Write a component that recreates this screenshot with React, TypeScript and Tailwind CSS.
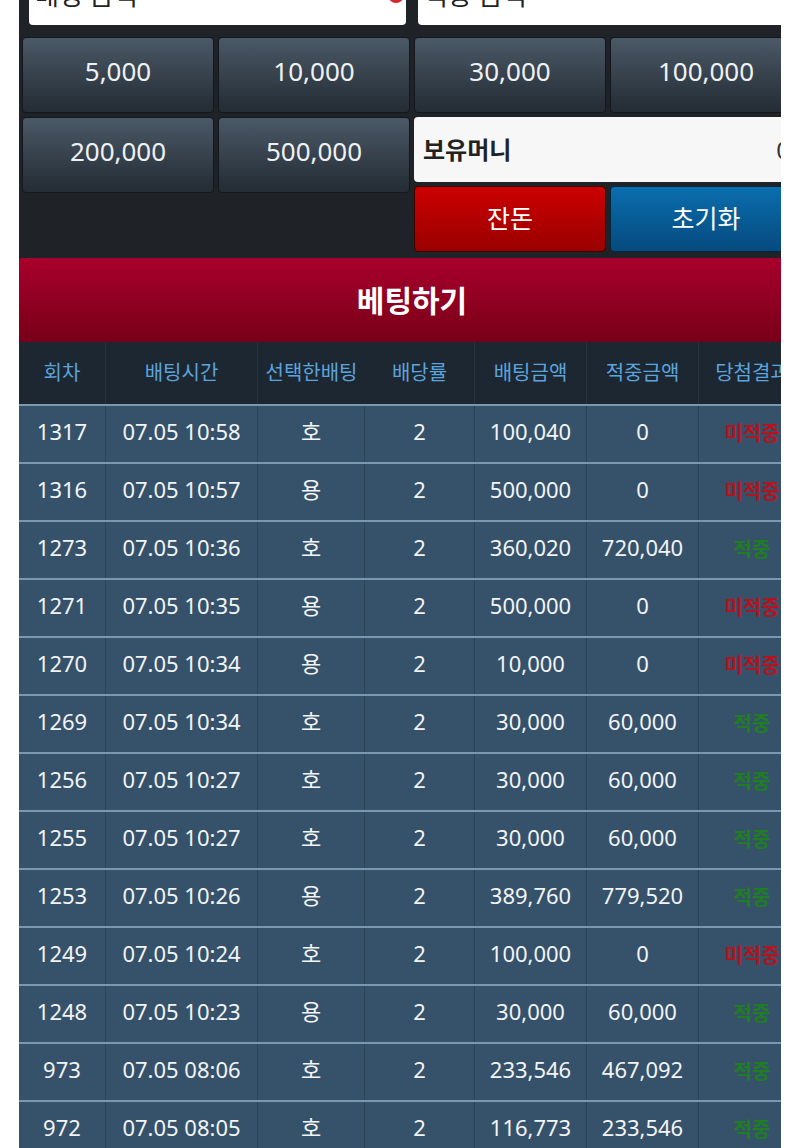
import React from "react";

type Row = {
  round: string;
  time: string;
  pick: string;
  odds: string;
  bet: string;
  win: string;
  hit: boolean;
};

const ROWS: Row[] = [
  { round: "1317", time: "07.05 10:58", pick: "호", odds: "2", bet: "100,040", win: "0", hit: false },
  { round: "1316", time: "07.05 10:57", pick: "용", odds: "2", bet: "500,000", win: "0", hit: false },
  { round: "1273", time: "07.05 10:36", pick: "호", odds: "2", bet: "360,020", win: "720,040", hit: true },
  { round: "1271", time: "07.05 10:35", pick: "용", odds: "2", bet: "500,000", win: "0", hit: false },
  { round: "1270", time: "07.05 10:34", pick: "용", odds: "2", bet: "10,000", win: "0", hit: false },
  { round: "1269", time: "07.05 10:34", pick: "호", odds: "2", bet: "30,000", win: "60,000", hit: true },
  { round: "1256", time: "07.05 10:27", pick: "호", odds: "2", bet: "30,000", win: "60,000", hit: true },
  { round: "1255", time: "07.05 10:27", pick: "호", odds: "2", bet: "30,000", win: "60,000", hit: true },
  { round: "1253", time: "07.05 10:26", pick: "용", odds: "2", bet: "389,760", win: "779,520", hit: true },
  { round: "1249", time: "07.05 10:24", pick: "호", odds: "2", bet: "100,000", win: "0", hit: false },
  { round: "1248", time: "07.05 10:23", pick: "용", odds: "2", bet: "30,000", win: "60,000", hit: true },
  { round: "973", time: "07.05 08:06", pick: "호", odds: "2", bet: "233,546", win: "467,092", hit: true },
  { round: "972", time: "07.05 08:05", pick: "호", odds: "2", bet: "116,773", win: "233,546", hit: true },
];

const HEADERS = ["회차", "배팅시간", "선택한배팅", "배당률", "배팅금액", "적중금액", "당첨결과"];

const COLS = "grid grid-cols-[87px_152px_107px_110px_112px_112px_106px]";

function ChipButton({ label }: { label: string }) {
  return (
    <button className="flex h-[76px] items-center justify-center rounded-[4px] border border-[#14181c] bg-gradient-to-b from-[#4b5967] to-[#242c34] pb-[7px] text-[26px] text-[#eef1f4]">
      {label}
    </button>
  );
}

export default function App() {
  return (
    <div className="h-[1148px] w-[800px] overflow-hidden bg-white font-['Noto_Sans','Noto_Sans_CJK_KR',sans-serif]">
      <div className="ml-[19px] h-full w-[762px] overflow-hidden">
        <div className="w-[786px] bg-[#1f2327]">
          {/* Amount inputs (scrolled partly out of view) */}
          <div className="-mt-[30px] grid grid-cols-2 gap-[12px] px-[10px]">
            <div className="relative h-[55px] overflow-hidden rounded-[4px] bg-white pl-[6px] pt-[12px] text-[26px] leading-none text-[#222]">
              배팅 금액
              <span className="absolute right-[2px] top-[17px] h-[16px] w-[16px] rounded-full bg-[#d9262c]" />
            </div>
            <div className="relative h-[55px] overflow-hidden rounded-[4px] bg-white pl-[6px] pt-[12px] text-[26px] leading-none text-[#222]">
              적중 금액
            </div>
          </div>

          {/* Chip buttons */}
          <div className="mt-[12px] grid grid-cols-4 gap-[4px] px-[3px]">
            <ChipButton label="5,000" />
            <ChipButton label="10,000" />
            <ChipButton label="30,000" />
            <ChipButton label="100,000" />
          </div>

          <div className="mt-[4px] grid grid-cols-4 items-start gap-[4px] px-[3px] pb-[6px]">
            <ChipButton label="200,000" />
            <ChipButton label="500,000" />
            <div className="col-span-2 flex flex-col gap-[4px]">
              <div className="flex h-[65px] items-center justify-between rounded-[4px] bg-[#f7f7f7] pl-[9px] pr-[12px]">
                <span className="text-[24px] font-bold text-[#222]">보유머니</span>
                <span className="text-[24px] text-[#333]">0</span>
              </div>
              <div className="grid grid-cols-2 gap-[4px]">
                <button className="flex h-[66px] items-center justify-center rounded-[4px] border border-[#3a0000] bg-gradient-to-b from-[#cc0000] to-[#9a0000] text-[25px] text-white">
                  잔돈
                </button>
                <button className="flex h-[66px] items-center justify-center rounded-[4px] border border-[#06263d] bg-gradient-to-b from-[#0b6eae] to-[#054a7e] text-[25px] text-white">
                  초기화
                </button>
              </div>
            </div>
          </div>

          {/* Bet button */}
          <button className="flex h-[84px] w-full items-center justify-center rounded-t-[4px] bg-gradient-to-b from-[#a8002b] to-[#780018] text-[30px] font-bold text-white">
            베팅하기
          </button>

          {/* History table */}
          <div className={`${COLS} h-[62px] bg-[#1d2731]`}>
            {HEADERS.map((h, i) => (
              <div
                key={h}
                className={`flex items-center justify-center overflow-hidden whitespace-nowrap text-[20px] text-[#5ca4dd] ${
                  i < HEADERS.length - 1 && i !== 2 ? "border-r border-[#27323d]" : ""
                }`}
              >
                {h}
              </div>
            ))}
          </div>

          {ROWS.map((r) => {
            const cells = [r.round, r.time, r.pick, r.odds, r.bet, r.win];
            return (
              <div key={r.round} className={`${COLS} h-[58px] border-t-2 border-[#7b97ad] bg-[#36526a]`}>
                {cells.map((c, i) => (
                  <div
                    key={i}
                    className="flex items-center justify-center border-r border-[#2b4257] pb-[5px] text-[22px] text-[#f2f4f6]"
                  >
                    {c}
                  </div>
                ))}
                <div
                  className={`flex items-center justify-center text-[20px] font-bold ${
                    r.hit ? "text-[#1f7e24]" : "text-[#b2151f]"
                  }`}
                >
                  {r.hit ? "적중" : "미적중"}
                </div>
              </div>
            );
          })}
        </div>
      </div>
    </div>
  );
}
